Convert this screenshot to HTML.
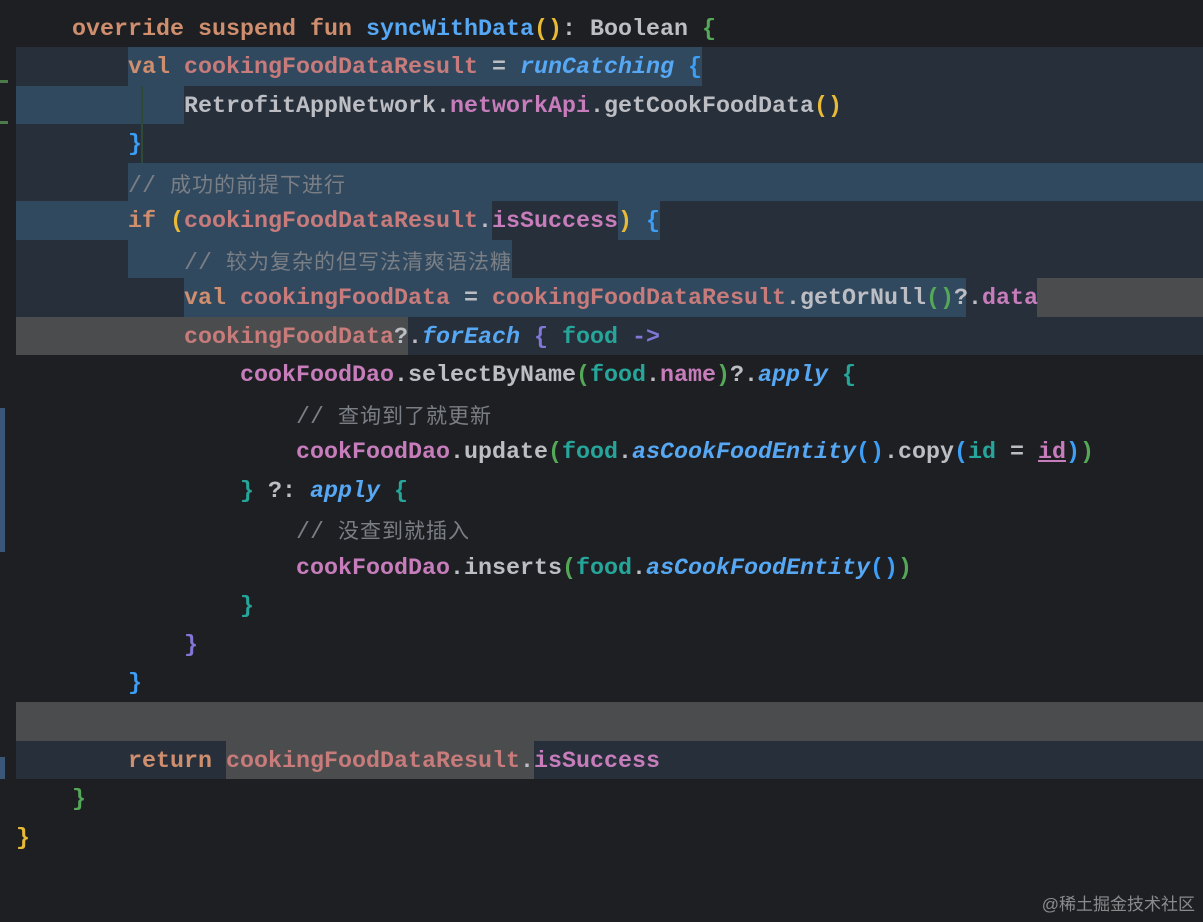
<!DOCTYPE html>
<html><head><meta charset="utf-8"><style>
body{margin:0;width:1203px;height:922px;background:#1e1f22;overflow:hidden;position:relative;font-family:"Liberation Mono",monospace;}
.bg{position:absolute;height:38.6px}
.D{background:#262f3a}.L{background:#31495f}.G{background:#4b4c4e}
.ln{position:absolute;left:16px;height:38.52px;line-height:38.52px;font-size:23.33px;font-weight:bold;white-space:pre;color:#bcbec4;margin-top:2px}
.k{color:#cf8e6d}.fd{color:#56a8f5}.v{color:#c77b7b}.p{color:#c77dbb}.it{color:#56a8f5;font-style:italic}
.c{color:#7a7e85;font-weight:normal}.cj{font-family:"Noto Sans CJK SC",sans-serif;font-size:21px;letter-spacing:1px;font-weight:normal}
.y{color:#e8ba36}.b{color:#3d9ef5}.g{color:#54a857}.pu{color:#8276d6}.t{color:#26a69a}.pr{color:#26a69a}
.mk{position:absolute;left:0;width:5px}
</style></head><body>
<div class="bg D" style="top:47px;left:16px;width:112px"></div>
<div class="bg L" style="top:47px;left:128px;width:574px"></div>
<div class="bg D" style="top:47px;left:702px;width:501px"></div>
<div class="bg L" style="top:85.5px;left:16px;width:168px"></div>
<div class="bg D" style="top:85.5px;left:184px;width:1019px"></div>
<div class="bg D" style="top:124px;left:16px;width:1187px"></div>
<div class="bg D" style="top:162.5px;left:16px;width:112px"></div>
<div class="bg L" style="top:162.5px;left:128px;width:1075px"></div>
<div class="bg L" style="top:201px;left:16px;width:476px"></div>
<div class="bg D" style="top:201px;left:492px;width:126px"></div>
<div class="bg L" style="top:201px;left:618px;width:42px"></div>
<div class="bg D" style="top:201px;left:660px;width:543px"></div>
<div class="bg D" style="top:239.5px;left:16px;width:112px"></div>
<div class="bg L" style="top:239.5px;left:128px;width:384px"></div>
<div class="bg D" style="top:239.5px;left:512px;width:691px"></div>
<div class="bg D" style="top:278px;left:16px;width:168px"></div>
<div class="bg L" style="top:278px;left:184px;width:782px"></div>
<div class="bg D" style="top:278px;left:966px;width:71px"></div>
<div class="bg G" style="top:278px;left:1037px;width:166px"></div>
<div class="bg G" style="top:316.5px;left:16px;width:392px;height:38.5px"></div>
<div class="bg D" style="top:316.5px;left:408px;width:795px;height:38.5px"></div>
<div class="bg G" style="top:702px;left:16px;width:1187px"></div>
<div class="bg D" style="top:740.5px;left:16px;width:210px"></div>
<div class="bg G" style="top:740.5px;left:226px;width:308px"></div>
<div class="bg D" style="top:740.5px;left:534px;width:669px"></div>
<div class="mk" style="top:80px;height:3px;width:8px;background:#4b7a4b"></div>
<div class="mk" style="top:121px;height:3px;width:8px;background:#4b7a4b"></div>
<div class="mk" style="top:408px;height:144px;background:#3b5778"></div>
<div class="mk" style="top:757px;height:22px;background:#3b5778"></div>
<div style="position:absolute;left:141px;top:86px;width:2px;height:77px;background:#2e4a36"></div>
<div class="ln" style="top:8.5px">    <span class="k">override suspend fun</span> <span class="fd">syncWithData</span><span class="y">()</span>: Boolean <span class="g">{</span></div>
<div class="ln" style="top:47px">        <span class="k">val</span> <span class="v">cookingFoodDataResult</span> = <span class="it">runCatching</span> <span class="b">{</span></div>
<div class="ln" style="top:85.5px">            RetrofitAppNetwork.<span class="p">networkApi</span>.getCookFoodData<span class="y">()</span></div>
<div class="ln" style="top:124px">        <span class="b">}</span></div>
<div class="ln" style="top:162.5px">        <span class="c">// <span class="cj">成功的前提下进行</span></span></div>
<div class="ln" style="top:201px">        <span class="k">if</span> <span class="y">(</span><span class="v">cookingFoodDataResult</span>.<span class="p">isSuccess</span><span class="y">)</span> <span class="b">{</span></div>
<div class="ln" style="top:239.5px">            <span class="c">// <span class="cj">较为复杂的但写法清爽语法糖</span></span></div>
<div class="ln" style="top:278px">            <span class="k">val</span> <span class="v">cookingFoodData</span> = <span class="v">cookingFoodDataResult</span>.getOrNull<span class="g">()</span>?.<span class="p">data</span></div>
<div class="ln" style="top:316.5px">            <span class="v">cookingFoodData</span>?.<span class="it">forEach</span> <span class="pu">{</span> <span class="t">food</span> <span class="pu">-&gt;</span></div>
<div class="ln" style="top:355px">                <span class="p">cookFoodDao</span>.selectByName<span class="g">(</span><span class="t">food</span>.<span class="p">name</span><span class="g">)</span>?.<span class="it">apply</span> <span class="t">{</span></div>
<div class="ln" style="top:393.5px">                    <span class="c">// <span class="cj">查询到了就更新</span></span></div>
<div class="ln" style="top:432px">                    <span class="p">cookFoodDao</span>.update<span class="g">(</span><span class="t">food</span>.<span class="it">asCookFoodEntity</span><span class="b">()</span>.copy<span class="b">(</span><span class="t">id</span> = <span class="p" style="text-decoration:underline">id</span><span class="b">)</span><span class="g">)</span></div>
<div class="ln" style="top:470.5px">                <span class="t">}</span> ?: <span class="it">apply</span> <span class="t">{</span></div>
<div class="ln" style="top:509px">                    <span class="c">// <span class="cj">没查到就插入</span></span></div>
<div class="ln" style="top:547.5px">                    <span class="p">cookFoodDao</span>.inserts<span class="g">(</span><span class="t">food</span>.<span class="it">asCookFoodEntity</span><span class="b">()</span><span class="g">)</span></div>
<div class="ln" style="top:586px">                <span class="t">}</span></div>
<div class="ln" style="top:624.5px">            <span class="pu">}</span></div>
<div class="ln" style="top:663px">        <span class="b">}</span></div>
<div class="ln" style="top:740.5px">        <span class="k">return</span> <span class="v">cookingFoodDataResult</span>.<span class="p">isSuccess</span></div>
<div class="ln" style="top:779px">    <span class="g">}</span></div>
<div class="ln" style="top:817.5px"><span class="y">}</span></div>
<div style="position:absolute;right:8px;top:890px;font-family:'Liberation Sans','Noto Sans CJK SC',sans-serif;font-size:17px;color:#8a8b8d">@稀土掘金技术社区</div>
</body></html>
